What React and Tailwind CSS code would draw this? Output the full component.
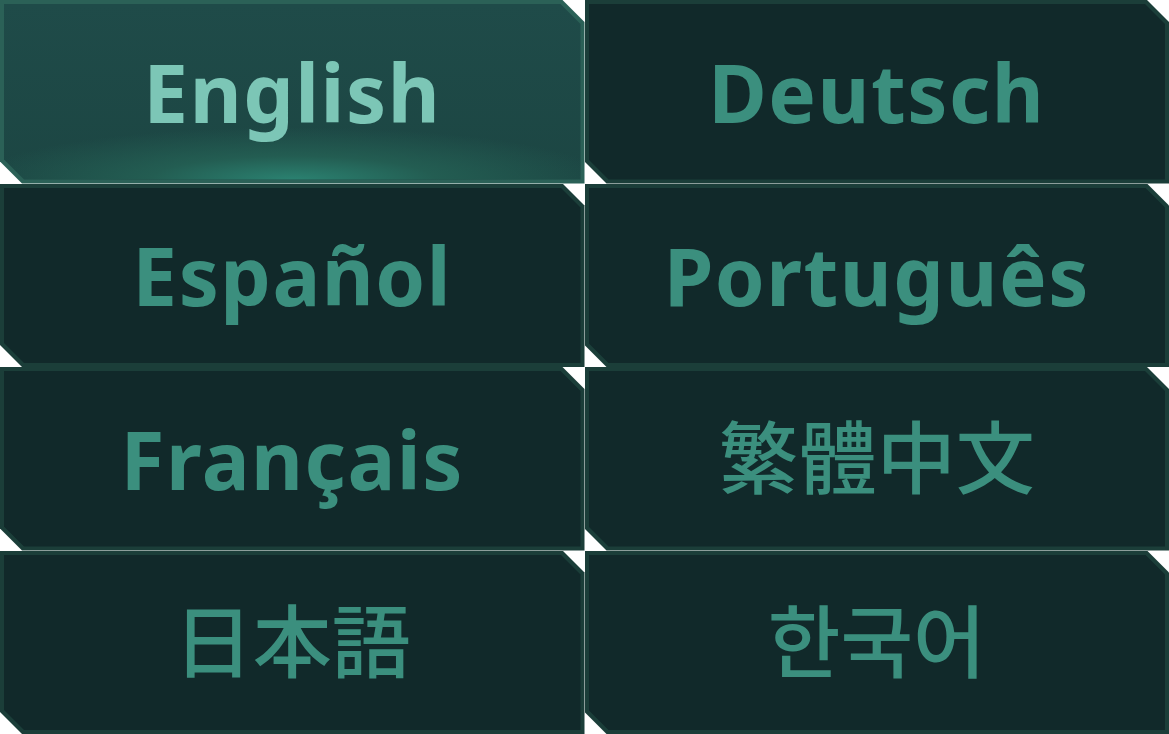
import React from 'react';

const langs = [
    { label: 'English', cjk: false },
    { label: 'Deutsch', cjk: false },
    { label: 'Español', cjk: false },
    { label: 'Português', cjk: false },
    { label: 'Français', cjk: false },
    { label: '繁體中文', cjk: true },
    { label: '日本語', cjk: true },
    { label: '한국어', cjk: true },
];

const LangTile = ({ label, cjk, active }) => (
    <div
        className={`p-[4px] [clip-path:polygon(0_0,calc(100%-22px)_0,100%_22px,100%_100%,22px_100%,0_calc(100%-22px))] ${
            active ? 'bg-[#2b6157]' : 'bg-[#1b3e39]'
        }`}
    >
        <div
            className={`relative h-full flex items-center justify-center [clip-path:polygon(0_0,calc(100%-20px)_0,100%_20px,100%_100%,20px_100%,0_calc(100%-20px))] ${
                active
                    ? 'bg-[radial-gradient(ellipse_55%_30%_at_50%_100%,#2b8271_0%,#235d52_45%,transparent_100%),linear-gradient(180deg,#1f4b49_0%,#1c4643_100%)]'
                    : 'bg-[#11292a]'
            }`}
        >
            <span
                className={`leading-none ${
                    cjk
                        ? "font-['Noto_Sans_CJK_JP','Noto_Sans_CJK_KR',sans-serif] font-medium text-[79px] -translate-y-[5px]"
                        : "font-['Noto_Sans',sans-serif] font-bold text-[80px] tracking-[1.5px]"
                } ${active ? 'text-[#7cc6b6]' : 'text-[#3b8f7e]'}`}
            >
                {label}
            </span>
        </div>
    </div>
);

export default function App() {
    return (
        <div className="w-[1169px] h-[734px] bg-white grid grid-cols-2 grid-rows-4">
            {langs.map((l, i) => (
                <LangTile key={l.label} label={l.label} cjk={l.cjk} active={i === 0} />
            ))}
        </div>
    );
}
